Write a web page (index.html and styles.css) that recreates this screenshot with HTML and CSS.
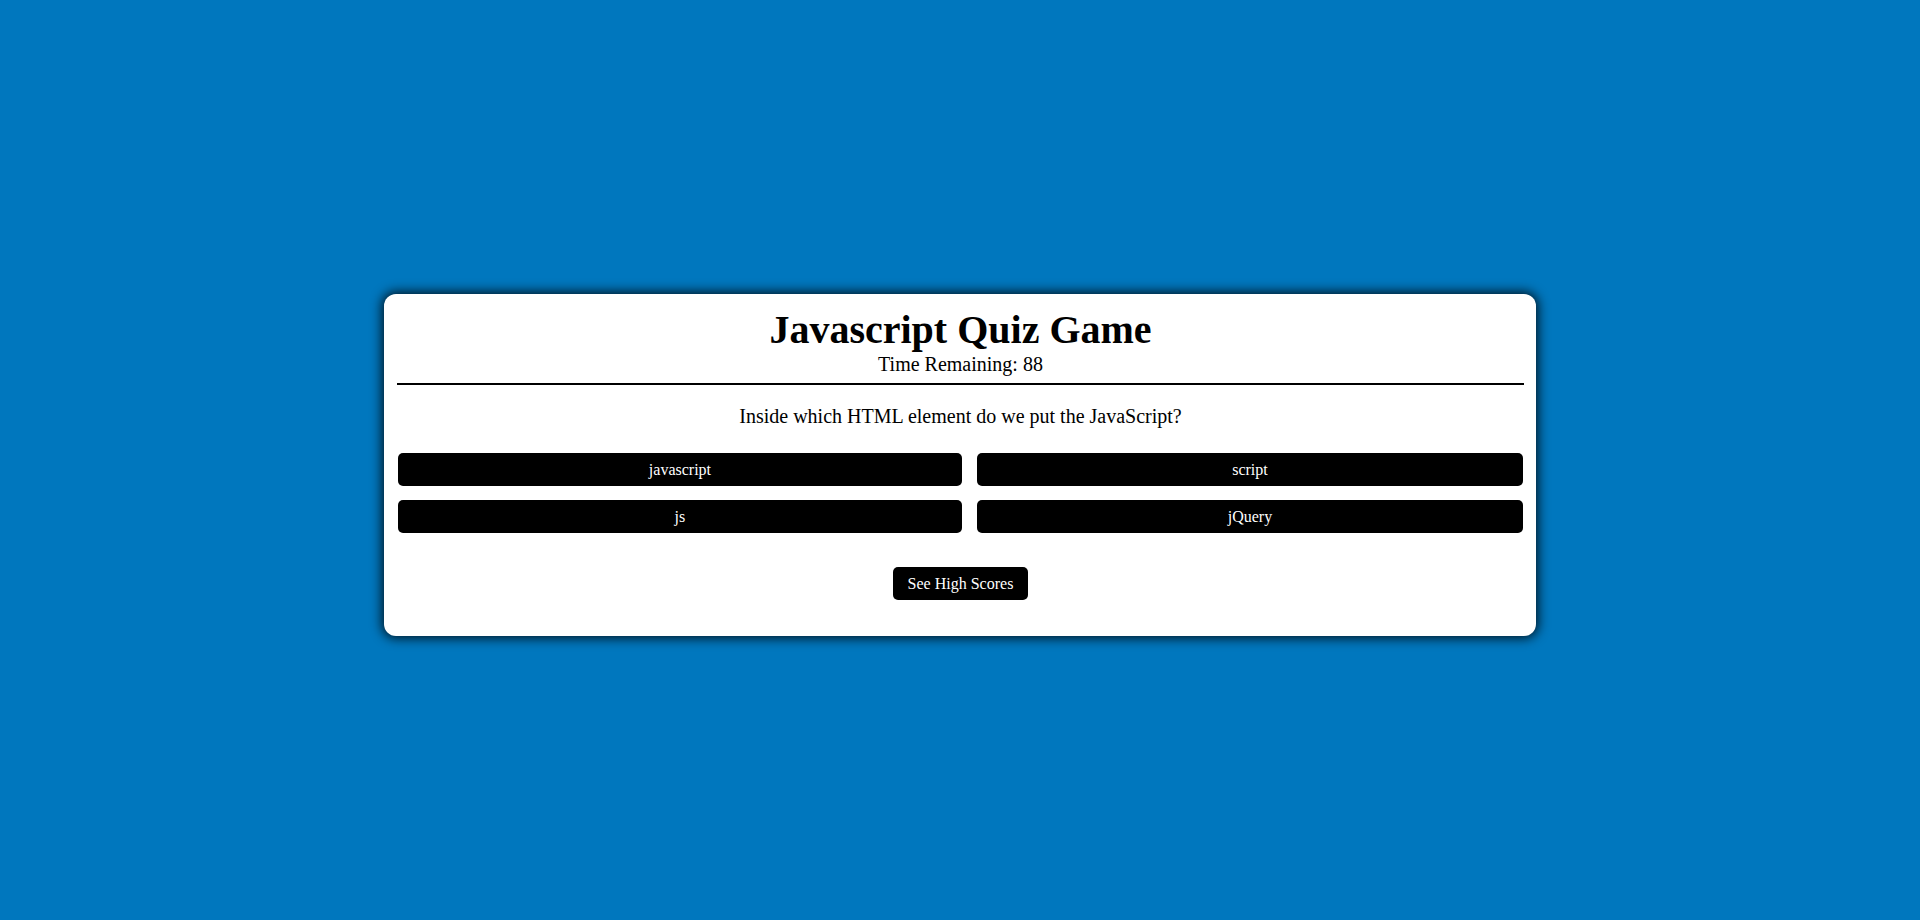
FILE: index.html
```html
<!DOCTYPE html>
<html>
<head>
<meta charset="utf-8">
<title>Javascript Quiz Game</title>
<link rel="stylesheet" href="styles.css">
</head>
<body>
<main class="card">
  <header class="head">
    <h1 class="title">Javascript Quiz Game</h1>
    <div class="timer">Time Remaining: 88</div>
  </header>
  <hr class="rule">
  <p class="question">Inside which HTML element do we put the JavaScript?</p>
  <div class="answers">
    <button class="answer">javascript</button>
    <button class="answer">script</button>
    <button class="answer">js</button>
    <button class="answer">jQuery</button>
  </div>
  <div class="footer">
    <button class="scores">See High Scores</button>
  </div>
</main>
</body>
</html>
```
FILE: styles.css
```css
html, body {
  margin: 0;
  height: 100%;
}
body {
  background: #0077be;
  font-family: "Liberation Serif", "Times New Roman", serif;
  color: #000;
  padding-top: 294px;
  box-sizing: border-box;
}
.card {
  width: 1152px;
  margin: 0 auto;
  background: #fff;
  border-radius: 12px;
  box-shadow: 0 0 12px 2px rgba(0, 0, 0, 0.85);
  padding: 13px 13px 36px 14px;
  box-sizing: border-box;
}
.head {
  text-align: center;
}
.title {
  margin: 0;
  font-size: 40px;
  line-height: 46px;
  font-weight: bold;
}
.timer {
  font-size: 20px;
  line-height: 23px;
}
.rule {
  margin: 7px -1px 0 -1px;
  border: none;
  border-top: 2px solid #000;
  height: 0;
}
.question {
  margin: 20px 0 0;
  text-align: center;
  font-size: 20px;
  line-height: 23px;
}
.answers {
  margin-top: 25px;
  display: grid;
  grid-template-columns: auto auto;
  column-gap: 15px;
  row-gap: 14px;
}
.answer, .scores {
  background: #000;
  color: #fff;
  border: none;
  border-radius: 5px;
  font-family: "Liberation Serif", "Times New Roman", serif;
  font-size: 16px;
  line-height: 19px;
  padding: 7px 0;
  cursor: pointer;
}
.footer {
  margin-top: 34px;
  display: flex;
  justify-content: center;
}
.scores {
  padding: 7px 15px;
}
```
